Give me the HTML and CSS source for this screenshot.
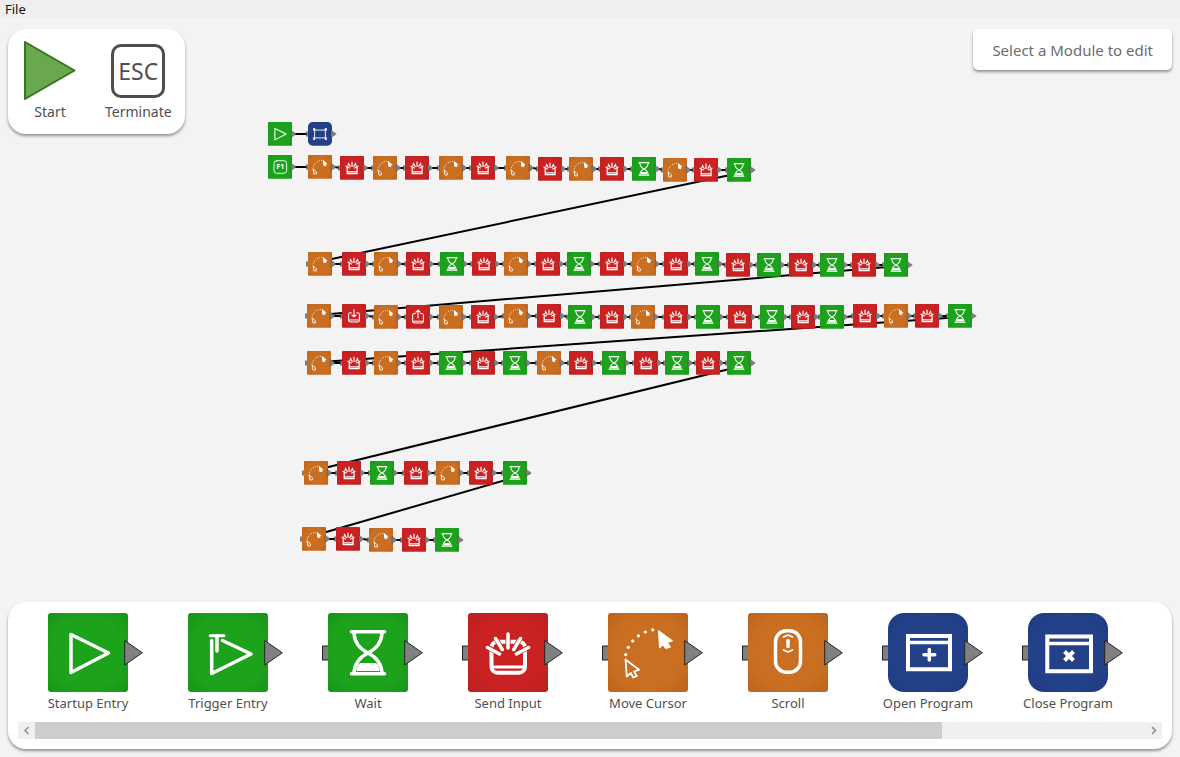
FILE: index.html
```html
<!DOCTYPE html>
<html lang="en">
<head>
<meta charset="utf-8">
<title>Module Editor</title>
<link rel="stylesheet" href="styles.css">
</head>
<body>
<svg class="defs" aria-hidden="true">
  <defs>
    <radialGradient id="fill-green" r="0.75"><stop offset="0.6" stop-color="#1ca31b"/><stop offset="1" stop-color="#1a901a"/></radialGradient>
    <radialGradient id="fill-red" r="0.75"><stop offset="0.6" stop-color="#ca2222"/><stop offset="1" stop-color="#b52020"/></radialGradient>
    <radialGradient id="fill-orange" r="0.75"><stop offset="0.6" stop-color="#ca6e21"/><stop offset="1" stop-color="#b7621d"/></radialGradient>
    <radialGradient id="fill-blue" r="0.75"><stop offset="0.6" stop-color="#224189"/><stop offset="1" stop-color="#1f3a7b"/></radialGradient>

    <rect id="port-in" class="port" x="-5.5" y="33" width="8" height="14"/>
    <path id="port-out" class="port" d="M76.7 27.5L94.3 39.8L76.7 52Z"/>
    <rect id="tile-green" width="80" height="79" rx="3" fill="url(#fill-green)"/>
    <rect id="tile-red" width="80" height="79" rx="3" fill="url(#fill-red)"/>
    <rect id="tile-orange" width="80" height="79" rx="3" fill="url(#fill-orange)"/>
    <rect id="tile-blue" width="80" height="79" rx="16" fill="url(#fill-blue)"/>

    <g id="startup">
      <use href="#tile-green"/>
      <path class="ink" d="M23 21.5V59.5L60.5 40Z"/>
      <use href="#port-out"/>
    </g>
    <g id="trigger">
      <use href="#tile-green"/>
      <path class="ink" d="M23.7 27.5V60.5L63 41L34.5 27.5"/>
      <path class="ink" d="M29 23V38"/>
      <path class="ink thin" d="M22.3 22.7H36"/>
      <use href="#port-out"/>
    </g>
    <g id="hotkey">
      <use href="#tile-green"/>
      <rect class="ink thin" x="20" y="19" width="42" height="42" rx="9"/>
      <text class="key-text" x="41" y="48" text-anchor="middle">F1</text>
      <use href="#port-out"/>
    </g>
    <g id="wait">
      <use href="#port-in"/><use href="#tile-green"/>
      <path class="ink" d="M23.5 18.8H56.5M23.5 60.7H56.5"/>
      <path class="ink" d="M26 20C26.5 30 32 36 40 40C48 44 53.5 50 54 60M54 20C53.5 30 48 36 40 40C32 44 26.5 50 26 60"/>
      <path class="solid" d="M28.5 58C29 54 30 50 33 50H47C50 50 51 54 51.5 58Z"/>
      <use href="#port-out"/>
    </g>
    <g id="send">
      <use href="#port-in"/><use href="#tile-red"/>
      <rect class="ink bold" x="23.5" y="28.7" width="33.5" height="31" rx="6"/>
      <path class="ink thin" d="M24 54H57"/>
      <path class="halo" d="M40 21V35M27.5 25L34.5 37M52.5 25L45.5 37M20 34.5L32 41M60 34.5L48 41"/>
      <path class="ink" d="M40 21V35M27.5 25.5L34.3 36.5M52.5 25.5L45.7 36.5M19.5 34.5L31.5 41M60.5 34.5L48.5 41"/>
      <use href="#port-out"/>
    </g>
    <g id="press">
      <use href="#port-in"/><use href="#tile-red"/>
      <path class="ink" d="M31 29H28Q22 29 22 35V54Q22 60 28 60H52Q58 60 58 54V35Q58 29 52 29H49M23 53H57M40 18V42M33 36L40 43L47 36"/>
      <use href="#port-out"/>
    </g>
    <g id="release">
      <use href="#port-in"/><use href="#tile-red"/>
      <path class="ink" d="M31 28H28Q22 28 22 34V54Q22 60 28 60H52Q58 60 58 54V34Q58 28 52 28H49M23 54H57M40 43V18M33 24L40 17L47 24"/>
      <use href="#port-out"/>
    </g>
    <g id="send-small">
      <use href="#port-in"/><use href="#tile-red"/>
      <path class="ink bold" d="M24 36V59H57V36M24 53H57M26 31L31 29M55 31L50 29M40 20V35M28 24L34 35M52 24L46 35M20 34L31 40M60 34L49 40"/>
      <use href="#port-out"/>
    </g>
    <g id="move">
      <use href="#port-in"/><use href="#tile-orange"/>
      <g class="solid">
        <circle cx="17.7" cy="41.7" r="1.6"/><circle cx="20.3" cy="34.3" r="1.6"/>
        <circle cx="24.7" cy="27.9" r="1.6"/><circle cx="30.4" cy="22.8" r="1.6"/>
        <circle cx="37.3" cy="19" r="1.6"/><circle cx="44.7" cy="16.8" r="1.6"/>
        <path class="arrow" d="M50.5 17.5L64.5 27.8L59.5 29.5L62.5 34.3L57.5 35.5L55 32L51.5 35Z"/>
      </g>
      <path class="ink fine" d="M17.5 46.5L31 56.8L26 58.5L28.8 63L25.3 64.5L22.8 60L18.8 63.5Z"/>
      <use href="#port-out"/>
    </g>
    <g id="move-small">
      <use href="#port-in"/><use href="#tile-orange"/>
      <path class="ink dotted" d="M17 45C17 30 32 17 48 18"/>
      <path class="solid" d="M49 16L65 29L60 31L62 35L57 37L51 35Z"/>
      <path class="ink thin" d="M18 48L28 56L28 63H21Z"/>
      <use href="#port-out"/>
    </g>
    <g id="scroll">
      <use href="#port-in"/><use href="#tile-orange"/>
      <rect class="ink" x="27.5" y="17.8" width="25" height="41.5" rx="11"/>
      <path class="ink fine" d="M35.5 24L40 22L44.5 24M35.5 37L40 39L44.5 37"/>
      <path class="ink" d="M40 27.5V33.5"/>
      <use href="#port-out"/>
    </g>
    <g id="window">
      <use href="#port-in"/><use href="#tile-blue"/>
      <path class="ink thin" d="M22 22V58M58 22V58M20 27H60M20 53H60"/>
      <path class="solid" d="M17 21H24V28H17ZM56 21H63V28H56ZM17 52H24V59H17ZM56 52H63V59H56Z"/>
      <use href="#port-out"/>
    </g>
    <g id="open">
      <use href="#port-in"/><use href="#tile-blue"/>
      <path class="frame" d="M20 23H62V56.2H20Z"/>
      <path class="band" d="M20 29.6H62"/>
      <path class="ink" d="M41.3 36.5V47M36 41.8H46.7"/>
      <use href="#port-out"/>
    </g>
    <g id="close">
      <use href="#port-in"/><use href="#tile-blue"/>
      <path class="frame" d="M19.3 23.6H63V58.3H19.3Z"/>
      <path class="band" d="M20 30.5H63"/>
      <path class="frame" d="M36.5 38.5L45.5 47.5M45.5 38.5L36.5 47.5"/>
      <use href="#port-out"/>
    </g>
  </defs>
</svg>

<header class="menubar"><button class="menu-item" type="button">File</button></header>

<main class="workspace">
  <svg class="canvas" id="canvas" role="img" aria-label="Module graph">
    <g id="edges"></g>
    <g id="nodes"></g>
  </svg>

  <div class="overlay">
    <div class="top-row">
      <section class="card run-card" aria-label="Run controls">
        <button class="run-button" type="button">
          <svg class="run-icon" viewBox="0 0 60 60" aria-hidden="true"><path class="start-shape" d="M5 1V58L54.5 29.5Z"/></svg>
          <span>Start</span>
        </button>
        <button class="run-button" type="button">
          <span class="run-icon"><span class="esc-key">ESC</span></span>
          <span>Terminate</span>
        </button>
      </section>
      <aside class="card hint">Select a Module to edit</aside>
    </div>

    <section class="card palette" aria-label="Modules">
      <div class="modules">
        <button class="module" type="button"><svg class="tile" aria-hidden="true"><use href="#startup"/></svg><span>Startup Entry</span></button>
        <button class="module" type="button"><svg class="tile" aria-hidden="true"><use href="#trigger"/></svg><span>Trigger Entry</span></button>
        <button class="module" type="button"><svg class="tile" aria-hidden="true"><use href="#wait"/></svg><span>Wait</span></button>
        <button class="module" type="button"><svg class="tile" aria-hidden="true"><use href="#send"/></svg><span>Send Input</span></button>
        <button class="module" type="button"><svg class="tile" aria-hidden="true"><use href="#move"/></svg><span>Move Cursor</span></button>
        <button class="module" type="button"><svg class="tile" aria-hidden="true"><use href="#scroll"/></svg><span>Scroll</span></button>
        <button class="module" type="button"><svg class="tile" aria-hidden="true"><use href="#open"/></svg><span>Open Program</span></button>
        <button class="module" type="button"><svg class="tile" aria-hidden="true"><use href="#close"/></svg><span>Close Program</span></button>
      </div>
      <div class="scrollbar">
        <button class="scroll-arrow" type="button" aria-label="Scroll left"><svg viewBox="0 0 17 17" aria-hidden="true"><path d="M10.5 5L7 8.5L10.5 12"/></svg></button>
        <div class="scroll-track"><div class="scroll-thumb"></div></div>
        <button class="scroll-arrow" type="button" aria-label="Scroll right"><svg viewBox="0 0 17 17" aria-hidden="true"><path d="M7 5L10.5 8.5L7 12"/></svg></button>
      </div>
    </section>
  </div>
</main>
<script src="graph.js"></script>
</body>
</html>
```
FILE: styles.css
```css
* { box-sizing: border-box; }

body {
  margin: 0;
  min-height: 100vh;
  display: flex;
  flex-direction: column;
  background: #f3f3f3;
  color: #505050;
  font-family: "Noto Sans", "Open Sans", sans-serif;
  font-size: 14px;
  line-height: 18px;
}

button {
  border: 0;
  padding: 0;
  background: none;
  color: inherit;
  font: inherit;
}

.defs { position: absolute; width: 0; height: 0; }

.menubar {
  display: flex;
  background: #efefef;
  color: #111;
  font-size: 13px;
}
.menu-item { padding: 0 5px; }

.workspace { flex: 1; display: grid; }
.canvas, .overlay { grid-area: 1 / 1; min-width: 0; }
.canvas { width: 100%; height: 100%; }

.overlay {
  display: flex;
  flex-direction: column;
  justify-content: space-between;
  padding: 11px 8px 8px;
}
.top-row {
  display: flex;
  justify-content: space-between;
  align-items: flex-start;
}

.card {
  background: #fff;
  border-radius: 18px;
  box-shadow: 0 2px 3px rgba(0, 0, 0, 0.4);
}

.run-card { display: flex; gap: 25px; padding: 12px 13px 13px 12px; }
.run-button { display: flex; flex-direction: column; align-items: center; gap: 2px; }
.run-icon {
  display: flex;
  align-items: center;
  justify-content: center;
  width: 60px;
  height: 60px;
}
.start-shape { fill: #6aa84f; stroke: #38761d; stroke-width: 2; stroke-linejoin: round; }
.esc-key {
  width: 54px;
  padding: 12px 0;
  border: 3px solid #4d4d4d;
  border-radius: 10px;
  font-size: 23px;
  line-height: 24px;
}

.hint {
  padding: 11px 19px 10px;
  border-radius: 5px;
  color: #6c6c6c;
  font-size: 15px;
  line-height: 20px;
}

.palette { padding: 11px 10px 10px; }
.modules { display: flex; overflow: hidden; }
.module {
  flex: 0 0 140px;
  display: flex;
  flex-direction: column;
  align-items: center;
  gap: 1px;
  font-size: 13px;
}
.tile { width: 80px; height: 80px; overflow: visible; }

.scrollbar { display: flex; margin-top: 10px; background: #f0f0f0; }
.scroll-arrow { width: 17px; height: 17px; }
.scroll-arrow svg { display: block; fill: none; stroke: #8c8c8c; stroke-width: 1.5; }
.scroll-track { flex: 1; }
.scroll-thumb { width: calc(100% * 49 / 60); height: 17px; background: #cdcdcd; }

.ink { fill: none; stroke: #fff; stroke-width: 3.5; stroke-linecap: round; stroke-linejoin: round; }
.bold { stroke-width: 4; }
.thin { stroke-width: 3; }
.fine { stroke-width: 1.8; }
.dotted { stroke-width: 2.5; stroke-dasharray: 1 6; }
.solid { fill: #fff; }
.arrow { stroke: #fff; stroke-width: 1; stroke-linejoin: round; }
.halo { fill: none; stroke: #ca2222; stroke-width: 5; }
.frame { fill: none; stroke: #fff; stroke-width: 4; }
.band { stroke: #fff; stroke-width: 3.5; }
.port { fill: #808080; stroke: #222; stroke-width: 1; }
.key-text { fill: #fff; font-size: 24px; font-weight: 700; }
.edge { stroke: #000; stroke-width: 2; }
```
FILE: graph.js
```js
const SCALE = 0.3;
const HALF = 12;

/* Each chain lists [module, centre x, centre y] in execution order. */
const chains = [
  [["startup", 280, 116], ["window", 320, 116]],
  [
    ["hotkey", 280, 149], ["move", 320, 149], ["send", 352, 150], ["move", 385, 150],
    ["send", 417, 150], ["move", 451, 150], ["send", 483, 150], ["move", 518, 150],
    ["send", 550, 151], ["move", 581, 151], ["send", 612, 151], ["wait", 644, 151],
    ["move", 675, 152], ["send", 706, 152], ["wait", 739, 152],

    ["move", 320, 246], ["send", 354, 246], ["move", 386, 246], ["send", 418, 246],
    ["wait", 452, 246], ["send", 484, 246], ["move", 516, 246], ["send", 548, 246],
    ["wait", 579, 246], ["send", 612, 246], ["move", 644, 246], ["send", 676, 246],
    ["wait", 707, 246], ["send", 738, 247], ["wait", 769, 247], ["send", 801, 247],
    ["wait", 832, 247], ["send", 864, 247], ["wait", 896, 247],

    ["move", 319, 298], ["press", 354, 298], ["move", 386, 299], ["release", 418, 299],
    ["move", 451, 299], ["send", 483, 299], ["move", 516, 298], ["send", 549, 298],
    ["wait", 580, 299], ["send", 612, 299], ["move", 643, 299], ["send", 676, 299],
    ["wait", 708, 299], ["send", 740, 299], ["wait", 772, 299], ["send", 803, 299],
    ["wait", 832, 299], ["send", 865, 298], ["move", 896, 298], ["send", 927, 298],
    ["wait", 960, 298],

    ["move", 319, 345], ["send", 354, 345], ["move", 386, 345], ["send", 418, 345],
    ["wait", 451, 345], ["send", 483, 345], ["wait", 515, 345], ["move", 549, 345],
    ["send", 581, 345], ["wait", 614, 345], ["send", 646, 345], ["wait", 677, 345],
    ["send", 708, 345], ["wait", 739, 345],

    ["move", 316, 455], ["send", 349, 455], ["wait", 382, 455], ["send", 416, 455],
    ["move", 448, 455], ["send", 481, 455], ["wait", 515, 455],

    ["move", 314, 521], ["send", 348, 521], ["move", 381, 522], ["send", 414, 522],
    ["wait", 447, 522]
  ]
];

/* Modules whose icon needs a bolder drawing at canvas size. */
const smallIcons = { move: "move-small", send: "send-small" };

const SVG_NS = "http://www.w3.org/2000/svg";

function add(parent, tag, attributes) {
  const element = document.createElementNS(SVG_NS, tag);
  for (const name in attributes) element.setAttribute(name, attributes[name]);
  parent.appendChild(element);
}

const edges = document.getElementById("edges");
const nodes = document.getElementById("nodes");

for (const chain of chains) {
  chain.forEach(([module, x, y], index) => {
    add(nodes, "use", {
      href: "#" + (smallIcons[module] || module),
      transform: `translate(${x - HALF} ${y - HALF}) scale(${SCALE})`
    });
    const next = chain[index + 1];
    if (next) {
      add(edges, "line", { class: "edge", x1: x + 15, y1: y, x2: next[1] - 12, y2: next[2] });
    }
  });
}
```
